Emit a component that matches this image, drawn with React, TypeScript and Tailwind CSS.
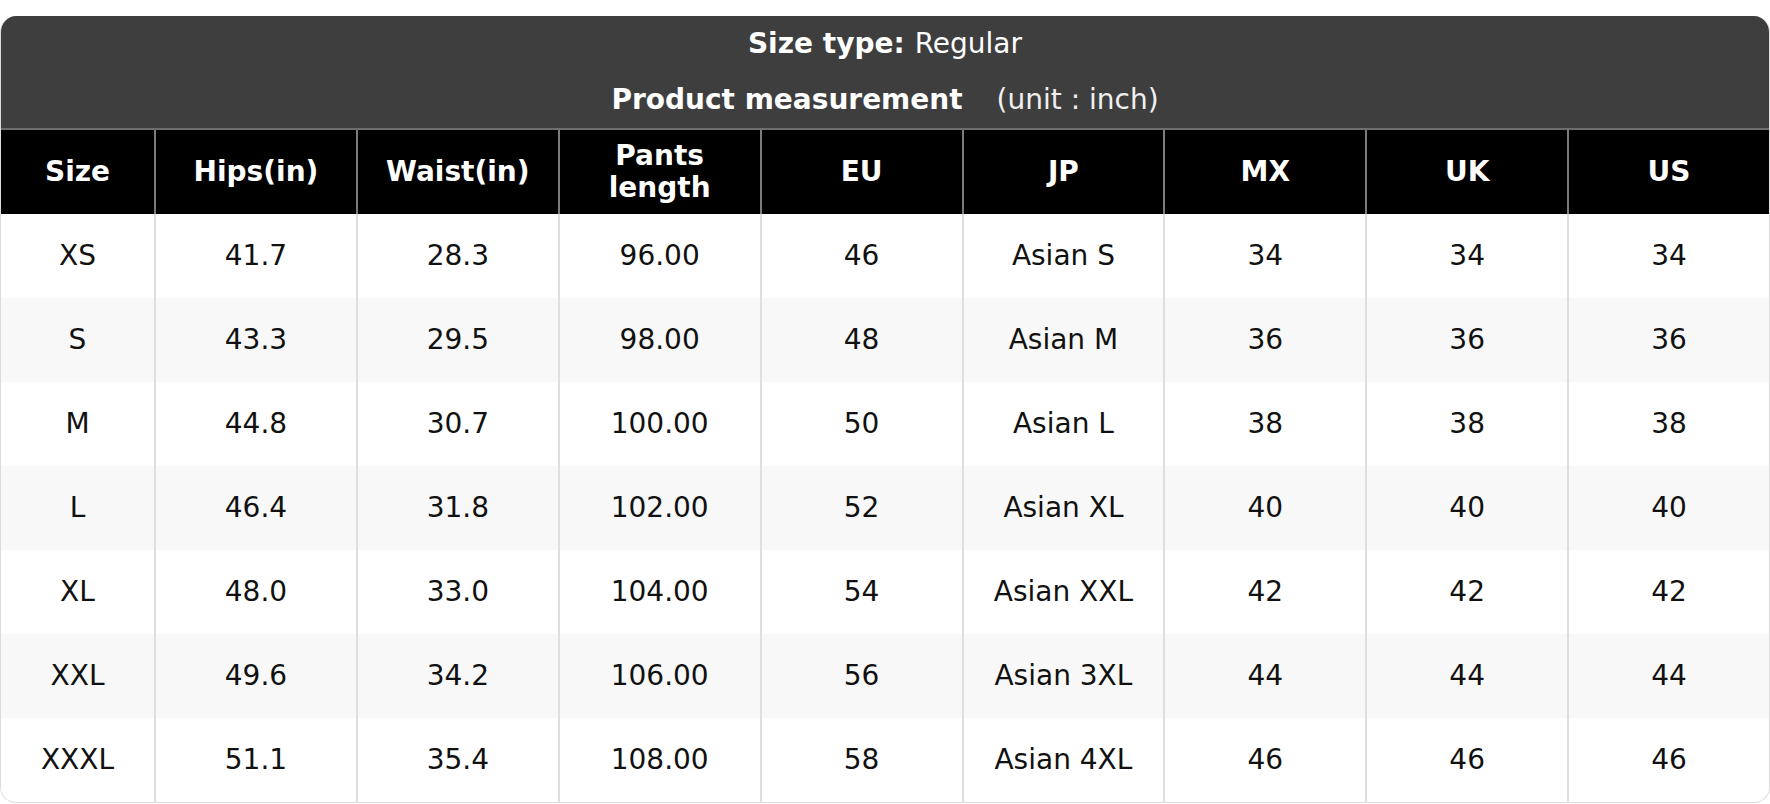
import React from 'react';

type Row = {
  size: string;
  hips: string;
  waist: string;
  pants: string;
  eu: string;
  jp: string;
  mx: string;
  uk: string;
  us: string;
};

const columnas = ['Size', 'Hips(in)', 'Waist(in)', 'Pants length', 'EU', 'JP', 'MX', 'UK', 'US'];

const filas: Row[] = [
  { size: 'XS', hips: '41.7', waist: '28.3', pants: '96.00', eu: '46', jp: 'Asian S', mx: '34', uk: '34', us: '34' },
  { size: 'S', hips: '43.3', waist: '29.5', pants: '98.00', eu: '48', jp: 'Asian M', mx: '36', uk: '36', us: '36' },
  { size: 'M', hips: '44.8', waist: '30.7', pants: '100.00', eu: '50', jp: 'Asian L', mx: '38', uk: '38', us: '38' },
  { size: 'L', hips: '46.4', waist: '31.8', pants: '102.00', eu: '52', jp: 'Asian XL', mx: '40', uk: '40', us: '40' },
  { size: 'XL', hips: '48.0', waist: '33.0', pants: '104.00', eu: '54', jp: 'Asian XXL', mx: '42', uk: '42', us: '42' },
  { size: 'XXL', hips: '49.6', waist: '34.2', pants: '106.00', eu: '56', jp: 'Asian 3XL', mx: '44', uk: '44', us: '44' },
  { size: 'XXXL', hips: '51.1', waist: '35.4', pants: '108.00', eu: '58', jp: 'Asian 4XL', mx: '46', uk: '46', us: '46' },
];

const gridCols = 'grid grid-cols-[153px_repeat(8,minmax(0,1fr))]';

function Titulo() {
  return (
    <div className="bg-[#3e3e3e] text-white">
      <div className="h-[56px] flex items-center justify-center">
        <span className="font-bold">Size type:</span>
        <span className="ml-[10px]">Regular</span>
      </div>
      <div className="h-[56px] flex items-center justify-center">
        <span className="font-bold">Product measurement</span>
        <span className="ml-[34px] text-[#f0f0f0]">(unit : inch)</span>
      </div>
    </div>
  );
}

function Cabecalho() {
  return (
    <div className={`${gridCols} bg-black text-white font-bold border-t-2 border-[#6e6e6e] h-[86px]`}>
      {columnas.map((c, i) => (
        <div
          key={c}
          className={`flex items-center justify-center text-center leading-[32px] ${i > 0 ? 'border-l-2 border-[#7c7c7c]' : ''}`}
        >
          {c === 'Pants length' ? (
            <span>
              Pants
              <br />
              length
            </span>
          ) : (
            c
          )}
        </div>
      ))}
    </div>
  );
}

export default function App() {
  return (
    <div className="w-[1770px] h-[804px] bg-white pt-[16px] font-['DejaVu_Sans',sans-serif] text-[28px]">
      <div className="rounded-[16px] border border-t-0 border-[#dcdcdc] overflow-hidden">
        <Titulo />
        <Cabecalho />
        {filas.map((f, idx) => (
          <div
            key={f.size}
            className={`${gridCols} h-[84px] text-[#111] ${idx % 2 === 1 ? 'bg-[#f8f8f8]' : 'bg-white'}`}
          >
            {[f.size, f.hips, f.waist, f.pants, f.eu, f.jp, f.mx, f.uk, f.us].map((v, i) => (
              <div
                key={i}
                className={`flex items-center justify-center ${i > 0 ? 'border-l-2 border-[#dedede]' : ''}`}
              >
                {v}
              </div>
            ))}
          </div>
        ))}
      </div>
    </div>
  );
}
